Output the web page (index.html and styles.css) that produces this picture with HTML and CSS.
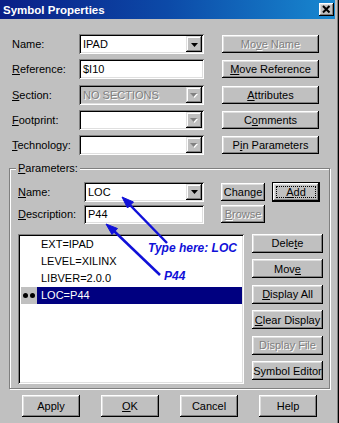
FILE: index.html
```html
<!DOCTYPE html>
<html lang="en">
<head>
	<meta charset="UTF-8">
	<title>Symbol Properties</title>
	<link rel="stylesheet" href="styles.css">
</head>
<body>
<div class="window">
<!-- title bar -->
	<div class="titlebar">
		<span class="title">Symbol Properties</span>
		<span class="close"><svg width="15" height="13" viewBox="0 0 15 13"><path d="M4 3 L10.5 9.5 M10.5 3 L4 9.5" stroke="#000" stroke-width="2"/></svg></span>
	</div>
<!-- symbol fields -->
	<div class="top">
		<span class="lbl">Name:</span>
		<div class="field combo"><span class="val">IPAD</span><span class="drop"><svg width="7" height="4"><polygon points="0,0 7,0 3.5,4" fill="#000"/></svg></span></div>
		<span class="btn side dis">Mo<u>v</u>e Name</span>

		<span class="lbl"><u>R</u>eference:</span>
		<div class="field"><span class="val">$I10</span></div>
		<span class="btn side"><u>M</u>ove Reference</span>

		<span class="lbl"><u>S</u>ection:</span>
		<div class="field combo off"><span class="val dis">NO SECTIONS</span><span class="drop"><svg width="8" height="5"><polygon points="1,1 8,1 4.5,5" fill="#fff"/><polygon points="0,0 7,0 3.5,4" fill="#808080"/></svg></span></div>
		<span class="btn side"><u>A</u>ttributes</span>

		<span class="lbl"><u>F</u>ootprint:</span>
		<div class="field combo"><span class="val"></span><span class="drop"><svg width="8" height="5"><polygon points="1,1 8,1 4.5,5" fill="#fff"/><polygon points="0,0 7,0 3.5,4" fill="#808080"/></svg></span></div>
		<span class="btn side">C<u>o</u>mments</span>

		<span class="lbl"><u>T</u>echnology:</span>
		<div class="field combo"><span class="val"></span><span class="drop"><svg width="8" height="5"><polygon points="1,1 8,1 4.5,5" fill="#fff"/><polygon points="0,0 7,0 3.5,4" fill="#808080"/></svg></span></div>
		<span class="btn side">P<u>i</u>n Parameters</span>
	</div>
<!-- parameters group -->
	<fieldset class="params">
		<legend><u>P</u>arameters:</legend>
		<div class="prow">
			<span class="lbl"><u>N</u>ame:</span>
			<div class="field combo"><span class="val">LOC</span><span class="drop"><svg width="7" height="4"><polygon points="0,0 7,0 3.5,4" fill="#000"/></svg></span></div>
			<span class="btn c4">Change</span>
			<span class="btn def"><span class="focus"><u>A</u>dd</span></span>

			<span class="lbl"><u>D</u>escription:</span>
			<div class="field desc"><span class="val">P44</span></div>
			<span class="btn c4 dis"><u>B</u>rowse</span>
		</div>
		<div class="plist">
			<div class="listbox">
				<div class="item"><span class="mark"></span><span class="txt">EXT=IPAD</span></div>
				<div class="item"><span class="mark"></span><span class="txt">LEVEL=XILINX</span></div>
				<div class="item"><span class="mark"></span><span class="txt">LIBVER=2.0.0</span></div>
				<div class="item sel"><span class="mark"><i class="dot"></i><i class="dot"></i></span><span class="txt">LOC=P44</span></div>
			</div>
			<div class="pbtns">
				<span class="btn">Dele<u>t</u>e</span>
				<span class="btn">Mov<u>e</u></span>
				<span class="btn"><u>D</u>isplay All</span>
				<span class="btn"><u>C</u>lear Display</span>
				<span class="btn dis">Display File</span>
				<span class="btn">Symbol Editor</span>
			</div>
		</div>
	</fieldset>
<!-- dialog buttons -->
	<div class="bottom">
		<span class="btn">Apply</span>
		<span class="btn"><u>O</u>K</span>
		<span class="btn">Cancel</span>
		<span class="btn">Help</span>
	</div>
<!-- hand drawn notes over the dialog -->
	<svg class="notes" width="339" height="423">
		<g fill="#1010d8" stroke="#1010d8">
			<line x1="167" y1="243" x2="130" y2="205" stroke-width="2.5"/>
			<polygon points="122,197 133.5,202 127.5,208" stroke-width="1"/>
			<line x1="160" y1="275" x2="114" y2="231" stroke-width="2.5"/>
			<polygon points="106,224 117.5,228.5 112,234.5" stroke-width="1"/>
		</g>
		<text x="148" y="252" class="note">Type here: LOC</text>
		<text x="164" y="280" class="note">P44</text>
	</svg>
</div>
</body>
</html>
```

FILE: styles.css
```css
*{
	margin:0;
	padding:0;
}
body{
	font-family:"Liberation Sans", Arial, sans-serif;
	font-size:11px;
	color:#000;
}
u{
	text-decoration:underline;
	text-underline-offset:1px;
}
.window{
	position:relative;
	width:339px;
	height:423px;
	background:#c0c0c0;
	box-shadow:inset -1px 0 #000, inset -2px 0 #808080;
	overflow:hidden;
}
.titlebar{
	height:19px;
	margin-right:4px;
	padding-left:3px;
	display:flex;
	align-items:center;
	justify-content:space-between;
	background:linear-gradient(to right, #0a1e86, #0c4aa8 50%, #1888d0);
}
.title{
	color:#fff;
	font-weight:bold;
	font-size:11.5px;
}
.close{
	width:15px;
	height:13px;
	margin-right:1px;
	display:block;
	background:#c0c0c0;
	box-shadow:inset -1px -1px #000, inset 1px 1px #fff, inset -2px -2px #808080, inset 2px 2px #dfdfdf;
}
.close svg{
	display:block;
}
/* top part */
.top{
	margin-top:15px;
	padding-left:12px;
	display:grid;
	grid-template-columns:67px 125px 18px 97px;
	grid-auto-rows:20px;
	row-gap:5.3px;
	align-items:center;
}
.side{
	grid-column:4;
}
.lbl{
	white-space:nowrap;
}
.field{
	height:20px;
	box-sizing:border-box;
	background:#fff;
	box-shadow:inset 1px 1px #808080, inset -1px -1px #fff, inset 2px 2px #000, inset -2px -2px #dfdfdf;
	display:flex;
	align-items:center;
	padding:2px;
}
.field.off{
	background:#c0c0c0;
}
.val{
	flex:1;
	padding-left:2px;
	white-space:nowrap;
}
.drop{
	width:16px;
	height:16px;
	background:#c0c0c0;
	box-shadow:inset -1px -1px #000, inset 1px 1px #dfdfdf, inset -2px -2px #808080, inset 2px 2px #fff;
	display:flex;
	align-items:center;
	justify-content:center;
}
.drop svg{
	display:block;
	margin-top:1px;
}
.btn{
	height:18px;
	box-sizing:border-box;
	background:#c0c0c0;
	box-shadow:inset -1px -1px #000, inset 1px 1px #fff, inset -2px -2px #808080, inset 2px 2px #dfdfdf;
	display:flex;
	align-items:center;
	justify-content:center;
	white-space:nowrap;
}
.dis{
	color:#808080;
	text-shadow:1px 1px 0 #fff;
}
/* parameters group */
.params{
	margin:7px 0 0 9px;
	width:319px;
	box-sizing:border-box;
	border:1px solid #808080;
	box-shadow:inset 1px 1px #fff, 1px 1px #fff;
	padding:6.5px 6px 4px 8px;
}
.params legend{
	margin-left:-2px;
	padding:0 2px;
	line-height:13px;
	background:#c0c0c0;
}
.prow{
	display:grid;
	grid-template-columns:66px 120px 17px 44px 7px 48px;
	grid-template-rows:20px 19px;
	row-gap:3px;
	align-items:center;
}
.prow .field{
	height:20px;
}
.prow .desc{
	height:19px;
}
.c4{
	grid-column:4;
}
.def{
	grid-column:6;
	height:20px;
	border:1px solid #000;
	padding:3px 3px 3px 3px;
	align-items:stretch;
}
.focus{
	flex:1;
	border:1px dotted #000;
	display:flex;
	align-items:center;
	justify-content:center;
}
.plist{
	margin-top:10px;
	display:flex;
	gap:8px;
}
.listbox{
	width:226px;
	height:150px;
	box-sizing:border-box;
	background:#fff;
	box-shadow:inset 1px 1px #808080, inset -1px -1px #fff, inset 2px 2px #000, inset -2px -2px #dfdfdf;
	padding:2px;
}
.item{
	height:17px;
	display:flex;
}
.mark{
	width:16px;
	margin-left:1px;
	display:flex;
	align-items:center;
	gap:2px;
	padding-left:2px;
	box-sizing:border-box;
}
.dot{
	width:5px;
	height:5px;
	border-radius:50%;
	background:#000;
}
.txt{
	flex:1;
	padding-left:4px;
	display:flex;
	align-items:center;
}
.sel .mark{
	background:#c0c0c0;
}
.sel .txt{
	background:#000080;
	color:#fff;
}
.pbtns{
	width:71px;
	display:flex;
	flex-direction:column;
	gap:6.5px;
}
.pbtns .btn{
	height:19px;
}
/* dialog buttons */
.bottom{
	margin-top:6px;
	padding-left:22px;
	display:flex;
	gap:21px;
}
.bottom .btn{
	width:58px;
	height:22px;
}
.notes{
	position:absolute;
	left:0;
	top:0;
	pointer-events:none;
}
.note{
	font-family:"Liberation Sans", Arial, sans-serif;
	font-size:12px;
	font-weight:bold;
	font-style:italic;
	fill:#1010d8;
}
```
